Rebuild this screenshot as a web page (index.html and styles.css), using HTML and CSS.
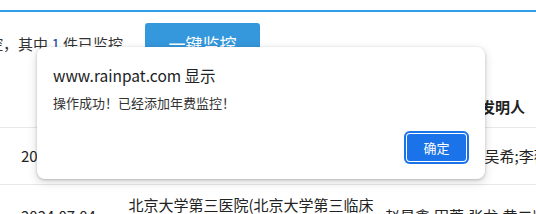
FILE: index.html
```html
<!DOCTYPE html>
<html lang="zh-CN">
<head>
<meta charset="utf-8">
<title>年费监控</title>
<link rel="stylesheet" href="styles.css">
</head>
<body>
<div class="page">
  <div class="topline"></div>
  <div class="toolbar">
    <span class="summary">控，其中 <span class="num">1</span> 件已监控</span>
    <button class="monitor-btn">一键监控</button>
  </div>
  <table class="grid">
    <colgroup>
      <col class="c-date">
      <col class="c-app">
      <col class="c-inv">
    </colgroup>
    <thead>
      <tr>
        <th class="center">申请日</th>
        <th class="center">申请人</th>
        <th class="center">发明人</th>
      </tr>
    </thead>
    <tbody>
      <tr>
        <td class="date">2024.07.04</td>
        <td>清华大学</td>
        <td class="inv inv-first">张伟;王芳;李明;吴希;李薇;刘强</td>
      </tr>
      <tr>
        <td class="date">2024.07.04</td>
        <td>北京大学第三医院(北京大学第三临床医学院)</td>
        <td class="inv">赵昊鑫;田蓉;张龙;黄二顺;刘洋</td>
      </tr>
    </tbody>
  </table>

  <div class="dialog">
    <div class="d-title">www.rainpat.com 显示</div>
    <div class="d-msg">操作成功！已经添加年费监控！</div>
    <div class="d-actions">
      <button class="d-ok">确定</button>
    </div>
  </div>
</div>
</body>
</html>
```

FILE: styles.css
```css
html, body {
  margin: 0;
  padding: 0;
  background: #fff;
}
body {
  font-family: "Noto Sans CJK SC", "Noto Sans", sans-serif;
  color: #222;
}
.page {
  position: relative;
  width: 536px;
  height: 214px;
  overflow: hidden;
}
.topline {
  margin-top: 10px;
  height: 2px;
  background: #2f9de8;
}
.toolbar {
  display: flex;
  align-items: center;
  margin-top: 11px;
  height: 40px;
}
.summary {
  margin-left: -12px;
  font-size: 15px;
  color: #333;
  white-space: nowrap;
}
.num {
  color: #1a4fa0;
}
.monitor-btn {
  margin-left: 22px;
  width: 115px;
  height: 40px;
  border: none;
  border-radius: 3px;
  background: #3598dc;
  color: #fff;
  font-family: "Noto Sans CJK SC", sans-serif;
  font-size: 17px;
  padding: 0;
}
.grid {
  margin-top: 23px;
  width: 620px;
  table-layout: fixed;
  border-collapse: collapse;
  font-size: 15px;
  color: #222;
}
.c-date { width: 117px; }
.c-app { width: 263px; }
.c-inv { width: 232px; }
.grid th {
  height: 41px;
  padding: 0;
  font-weight: bold;
  border-bottom: 1px solid #e8e8e8;
  vertical-align: middle;
  line-height: 22px;
}
.grid td {
  padding: 9px 0;
  height: 38px;
  line-height: 22px;
  vertical-align: middle;
  border-bottom: 1px solid #e8e8e8;
  text-align: left;
  word-break: break-all;
}
.grid td:nth-child(2) {
  padding-left: 10px;
}
.grid td.date {
  padding-left: 21px;
  white-space: nowrap;
}
.grid td.inv {
  padding-left: 0;
  white-space: nowrap;
}
.grid td.inv-first {
  text-indent: -3px;
}
.center { text-align: center; }

.dialog {
  position: absolute;
  left: 37px;
  top: 47px;
  width: 448px;
  height: 132px;
  box-sizing: border-box;
  background: #fff;
  border-radius: 8px;
  box-shadow: 0 1px 3px rgba(0,0,0,0.22), 0 3px 8px 2px rgba(0,0,0,0.10);
  padding: 17px 16px 15px 16px;
  display: flex;
  flex-direction: column;
}
.d-title {
  font-size: 15.5px;
  line-height: 22px;
  color: #202124;
}
.d-msg {
  margin-top: 8px;
  font-size: 13px;
  line-height: 18px;
  color: #333;
}
.d-actions {
  margin-top: auto;
  display: flex;
  justify-content: flex-end;
}
.d-ok {
  width: 65px;
  height: 33px;
  border: none;
  border-radius: 6px;
  background: #1a73e8;
  box-shadow: inset 0 0 0 2px #1a73e8, inset 0 0 0 3px #fff;
  color: #fff;
  font-family: "Noto Sans CJK SC", sans-serif;
  font-size: 13px;
  padding: 0;
}
```
